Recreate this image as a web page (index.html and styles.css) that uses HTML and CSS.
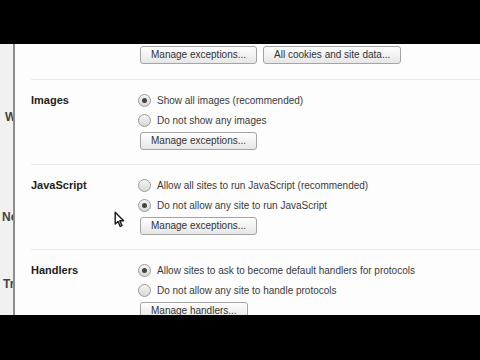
FILE: index.html
```html
<!DOCTYPE html>
<html>
<head>
<meta charset="utf-8">
<link rel="stylesheet" href="styles.css">
</head>
<body>
<div class="frame">
  <div class="bar-top"></div>
  <div class="viewport">
    <div class="sidebar">
      <div class="nav nav-w">W</div>
      <div class="nav nav-ne">Ne</div>
      <div class="nav nav-tr">Tr</div>
    </div>
    <div class="rule"></div>
    <div class="content">
      <div class="section section-first">
        <div class="label"></div>
        <div class="controls">
          <div class="btn-row">
            <button class="btn">Manage exceptions...</button>
            <button class="btn">All cookies and site data...</button>
          </div>
        </div>
      </div>
      <div class="section">
        <div class="label">Images</div>
        <div class="controls">
          <div class="opt"><span class="radio checked"></span>Show all images (recommended)</div>
          <div class="opt"><span class="radio"></span>Do not show any images</div>
          <button class="btn">Manage exceptions...</button>
        </div>
      </div>
      <div class="section">
        <div class="label">JavaScript</div>
        <div class="controls">
          <div class="opt"><span class="radio"></span>Allow all sites to run JavaScript (recommended)</div>
          <div class="opt"><span class="radio checked"></span>Do not allow any site to run JavaScript</div>
          <button class="btn">Manage exceptions...</button>
        </div>
      </div>
      <div class="section section-last">
        <div class="label">Handlers</div>
        <div class="controls">
          <div class="opt"><span class="radio checked"></span>Allow sites to ask to become default handlers for protocols</div>
          <div class="opt"><span class="radio"></span>Do not allow any site to handle protocols</div>
          <button class="btn">Manage handlers...</button>
        </div>
      </div>
    </div>
    <svg class="cursor" width="11" height="17" viewBox="0 0 11 17">
      <path d="M1.2 1.2 L1.2 13 L4 10.4 L6.2 15.4 L8 14.6 L5.8 9.7 L9.6 9.7 Z" fill="#fff" stroke="#1a1a1a" stroke-width="1.4" stroke-linejoin="round"/>
    </svg>
  </div>
  <div class="bar-bottom"></div>
</div>
</body>
</html>
```

FILE: styles.css
```css
* { box-sizing: border-box; }
html, body { margin: 0; padding: 0; background: #000; }
body {
  width: 480px;
  height: 360px;
  overflow: hidden;
  font-family: "Liberation Sans", Arial, sans-serif;
  font-size: 10px;
  color: #333;
}
.frame { display: flex; flex-direction: column; width: 480px; height: 360px; }
.bar-top { height: 44px; background: #000; flex: none; }
.bar-bottom { height: 45px; background: #000; flex: none; }
.viewport {
  position: relative;
  flex: none;
  height: 271px;
  display: flex;
  background: #fdfdfd;
  overflow: hidden;
}
.sidebar {
  width: 13px;
  flex: none;
  background: #f1f1f1;
  overflow: hidden;
  display: flex;
  flex-direction: column;
  font-weight: bold;
  font-size: 12px;
  color: #444;
  white-space: nowrap;
}
.nav { line-height: 14px; }
.nav-w { margin-top: 66px; padding-left: 5px; }
.nav-ne { margin-top: 86px; padding-left: 2px; }
.nav-tr { margin-top: 53px; padding-left: 3px; }
.rule { width: 2px; flex: none; background: #8e8e8e; }
.content { flex: 1; padding-left: 16px; display: flex; flex-direction: column; }
.section {
  display: flex;
  border-bottom: 1px solid #e8e8e8;
  padding: 10px 0 14px;
}
.section-first { padding-top: 2px; padding-bottom: 15px; }
.section-last { border-bottom: none; }
.label {
  width: 107px;
  flex: none;
  font-weight: bold;
  font-size: 11px;
  color: #222;
  line-height: 20px;
}
.controls { display: flex; flex-direction: column; align-items: flex-start; }
.opt {
  height: 20px;
  display: flex;
  align-items: center;
  white-space: nowrap;
  color: #3a3a3a;
}
.radio {
  width: 13px;
  height: 13px;
  border-radius: 50%;
  border: 1px solid #9a9a9a;
  background: linear-gradient(#f4f4f4, #d8d8d8);
  margin-right: 6px;
  flex: none;
  display: flex;
  align-items: center;
  justify-content: center;
}
.radio.checked::after {
  content: "";
  width: 5px;
  height: 5px;
  border-radius: 50%;
  background: #444;
}
.btn-row { display: flex; }
.btn {
  font-family: "Liberation Sans", Arial, sans-serif;
  font-size: 10px;
  color: #333;
  height: 18px;
  padding: 0 10px;
  margin: 2px 0 0 2px;
  border: 1px solid #a4a4a4;
  border-radius: 3px;
  background: linear-gradient(#fefefe, #e6e6e6);
  line-height: 16px;
}
.btn-row .btn { margin-top: 0; }
.btn-row .btn + .btn { margin-left: 6px; }
.cursor { position: absolute; left: 114px; top: 167px; }
```
